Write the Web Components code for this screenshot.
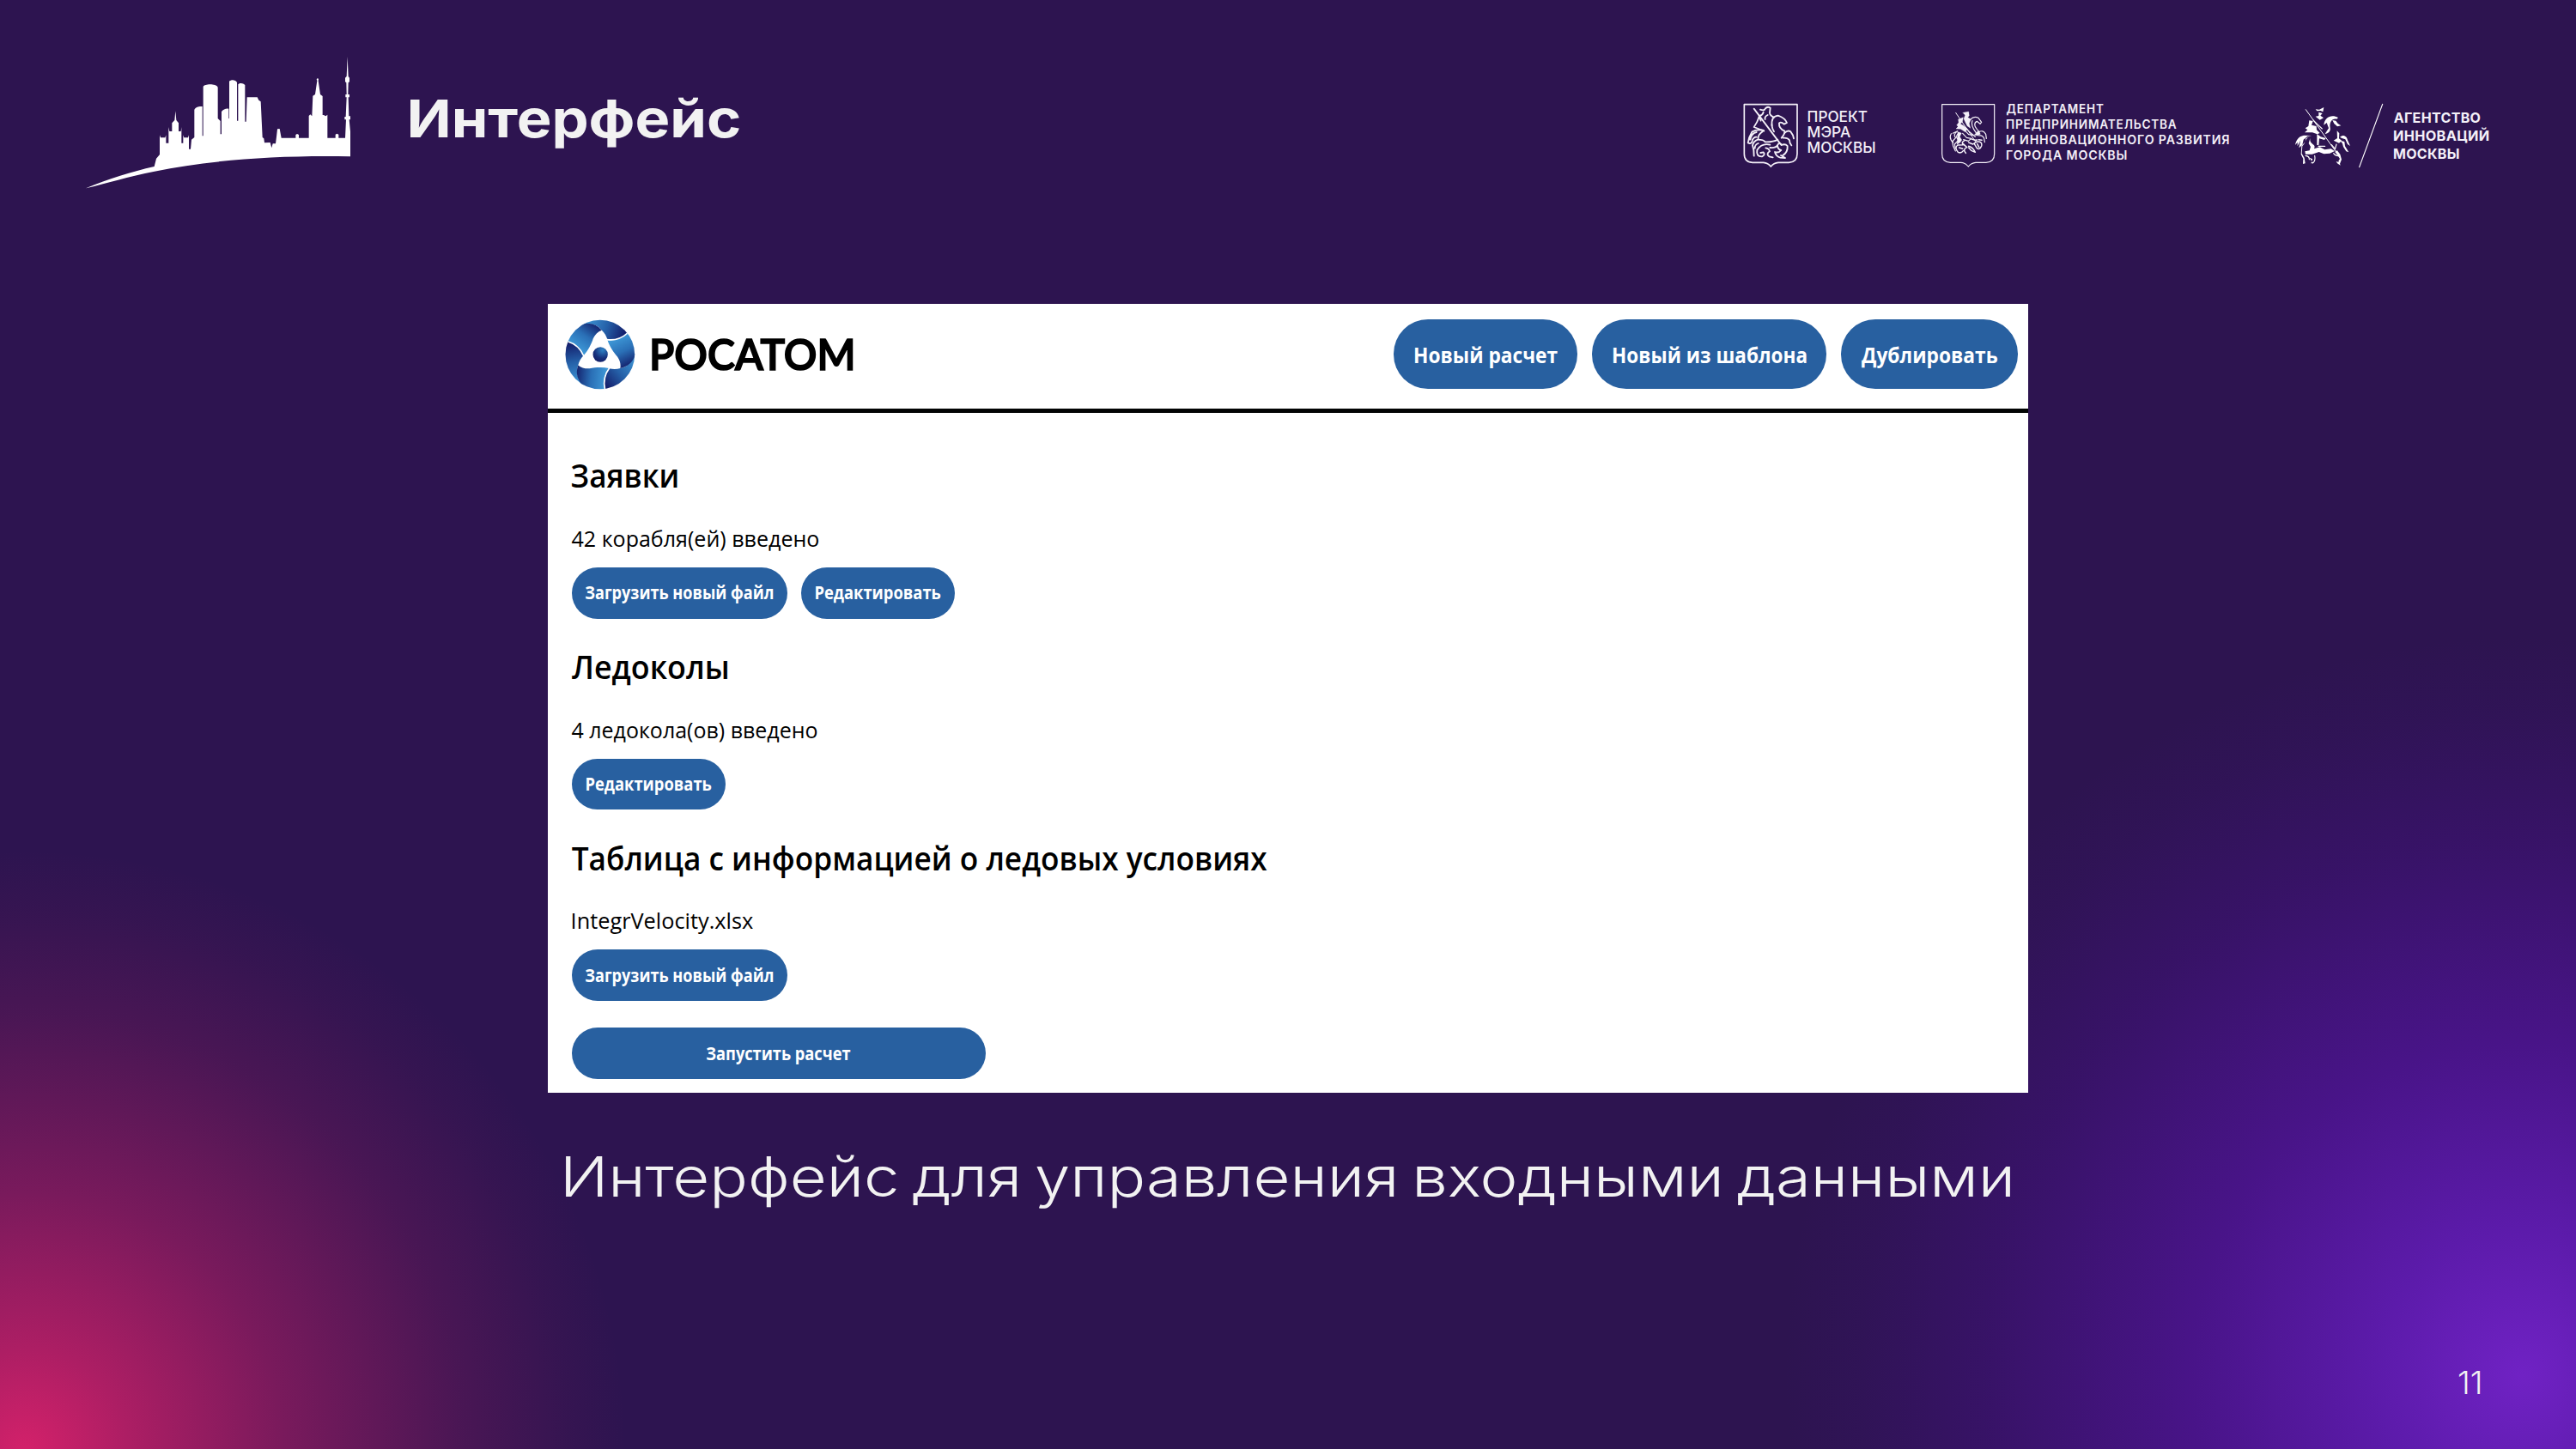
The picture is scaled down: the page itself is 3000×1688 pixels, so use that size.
<!DOCTYPE html>
<html lang="ru">
<head>
<meta charset="utf-8">
<title>Интерфейс</title>
<style>
html,body{margin:0;padding:0;background:#2d1450}
body{width:3000px;height:1688px;overflow:hidden;font-family:Inter,sans-serif}
</style>
</head>
<body>
<deck-slide></deck-slide>
<script>
const define = (name, html, init) => customElements.define(name, class extends HTMLElement {
  connectedCallback() {
    if (this.shadowRoot) return;
    this.attachShadow({mode: 'open'}).innerHTML = html;
    if (init) init(this, this.shadowRoot);
  }
});

/* One line of text: `cap` is the capital height, `w` the visible width. The box is exactly w × cap.
   `ls` and `ws` are letter and word spacing in em, `dy` a baseline nudge in px. */
const ctx = document.createElement('canvas').getContext('2d');
customElements.define('cap-text', class extends HTMLElement {
  connectedCallback() {
    if (this.shadowRoot) return;
    const root = this.attachShadow({mode: 'open'});
    const text = this.getAttribute('text');
    const cap = +this.getAttribute('cap'), w = +this.getAttribute('w');
    const ls = +(this.getAttribute('ls') || 0), ws = +(this.getAttribute('ws') || 0);
    const family = this.getAttribute('font') || 'Inter', weight = this.getAttribute('weight') || '400';
    const nudge = this.hasAttribute('dy') ? +this.getAttribute('dy') : (family === 'Open Sans' ? 0.8 : 0);
    ctx.font = `${weight} 200px "${family}"`;
    ctx.letterSpacing = '0px';
    ctx.wordSpacing = '0px';
    const size = 200 * cap / ctx.measureText('Н').actualBoundingBoxAscent;
    ctx.letterSpacing = ls * 200 + 'px';
    ctx.wordSpacing = ws * 200 + 'px';
    const m = ctx.measureText(text), f = size / 200;
    const ink = (m.actualBoundingBoxLeft + m.actualBoundingBoxRight) * f;
    const k = w / ink;
    const dx = m.actualBoundingBoxLeft * f * k;
    const dy = cap / 2 - (m.fontBoundingBoxAscent - m.fontBoundingBoxDescent) * f / 2 + nudge;
    root.innerHTML = `<style>
      :host{display:block;flex:none;width:${w}px;height:${cap}px;line-height:${cap}px;white-space:nowrap}
      span{display:inline-block;font:${weight} ${size}px/${cap}px "${family}",sans-serif;letter-spacing:${ls}em;word-spacing:${ws}em;
        -webkit-text-stroke:var(--thicken,0) currentColor;
        transform:translate(${dx}px,${dy}px) scaleX(${k});transform-origin:0 50%}
    </style><span></span>`;
    root.querySelector('span').textContent = text;
  }
});

define('city-skyline', `<style>:host{display:block;flex:none;width:350px;height:180px}svg{display:block}</style>
<svg width="350" height="180" viewBox="0 0 1050 540" fill="#fff">
<path d="M60 508C140 474 220 450 299 432L306 404L318 390V322L321 331H337L340 322V350H349V294L352 309H361V280L370 270L373 238L376 270L384 280V309H392L394 294V350H400V322L403 331H417L420 322V371H426L429 338L439 330V234C442 224 455 221 467 222V325H470V153C475 142 515 142 521 155V264L530 273V319H534V240C540 232 550 228 559 230V264H561V134C568 127 583 128 588 138V272H592V145C598 138 610 140 616 147V275H620L623 190H659L664 200L671 205L677 330L682 334L684 349L704 348L709 367L713 352L723 352L726 328L729 301L737 300L743 332H793V321L798 318L804 321V332H839V255L844 250L850 256L853 185L861 180L868 132L866 127L870 123L873 127L872 132L879 180L887 186V252H891L898 256L904 251V332H932V320L937 317L943 320V332H966L969 268H964V258H968L971 190H967V180H971L970 139L966 136V122L971 117L974 48L977 117L981 122V136L977 139L976 180H981V190H977L979 256H984V268H980L984 310V397C740 392 500 408 300 449C210 467 130 491 60 508Z"/>
</svg>`);

define('shield-outline', `<style>:host{display:block;flex:none;width:75px;height:85px}svg{display:block}</style>
<svg width="75" height="85" viewBox="45 45 225 255" fill="none" stroke="#f4f0f8" stroke-width="5.5" stroke-linecap="round" stroke-linejoin="round">
<path stroke-width="5" d="M64 65H249V238Q249 267 220 268H183Q167 269 157 282Q147 269 131 268H93Q64 267 64 238Z"/>
<path d="M98 80L192 205"/>
<path d="M120 83Q135 88 137 80Q145 70 155 77L153 95Q154 104 167 110M131 92Q128 103 117 105Q110 128 98 144Q116 152 132 156M146 102Q134 108 137 117M116 107L122 122"/>
<path d="M161 138Q157 107 182 104L192 108Q207 115 213 129L203 134Q193 124 186 130Q184 149 205 158Q206 169 194 182"/>
<path d="M205 165Q216 153 226 160Q236 172 237 184M199 182Q215 180 222 190Q222 202 229 208"/>
<path d="M133 158Q112 149 91 161Q80 179 77 199Q91 206 93 188Q99 177 107 179M107 162Q89 165 85 188"/>
<path d="M128 160Q110 172 113 187Q96 193 93 208Q99 225 98 245M113 201Q101 205 101 218M113 188Q131 188 137 196Q165 197 181 188M160 137Q162 151 168 160"/>
<path d="M154 206Q125 199 109 224Q105 248 126 247Q139 240 131 232L121 234M139 217Q151 219 153 229Q139 238 151 247L164 250M154 216Q174 218 180 208Q181 222 193 225Q184 236 171 231M171 232Q176 248 190 251L207 252L192 243M194 207Q207 201 215 210Q217 232 198 244M181 206Q186 198 193 204"/>
</svg>`);

define('shield-engraved', `<style>:host{display:block;flex:none;width:75px;height:85px}svg{display:block}</style>
<svg width="75" height="85" viewBox="45 45 225 255" fill="none" stroke="#f4f0f8" stroke-width="3.6" stroke-linecap="round" stroke-linejoin="round">
<path d="M65 65H248V238Q248 267 219 268H183Q167 269 157 282Q147 269 131 268H94Q65 267 65 238Z"/>
<path d="M113 94L184 198" stroke-width="3"/>
<path fill="#f4f0f8" stroke-width="1" d="M138 94L158 90L160 104L155 110L166 117L160 131L164 148L153 140L147 128L141 115L146 103ZM122 117L139 110L136 127L128 132L142 140L153 152L146 161L130 151L114 150L122 142L116 138L123 128ZM184 165L193 155L199 169L190 174L178 172ZM120 161L133 165L127 178L134 189L129 197L117 205L119 187Z"/>
<path d="M164 118Q176 104 192 112L203 127L198 133L187 124Q176 128 181 143L190 156M171 122Q166 136 176 152L184 164M137 166L151 181L167 184L157 193L140 188M193 162Q208 152 218 169L220 184M194 174Q207 171 212 184L214 197M103 166L119 158M119 158Q102 170 113 181L101 195L104 211L112 228M97 167Q88 184 104 198M126 164Q108 174 122 190L109 204L112 219M149 160L158 170L176 173M133 122L121 145M147 145L163 163L181 178"/>
<path stroke-width="4.5" d="M144 191Q131 197 139 206L120 207Q107 216 121 232Q132 237 139 227M139 203L152 215Q136 222 148 235M158 198L173 204L184 196Q207 192 203 210Q197 225 187 218L178 203M158 211Q173 215 181 232L167 226L158 216M125 216L137 220M188 203L194 214M166 185Q178 191 187 189M193 188L204 190"/>
</svg>`);

define('rider-mark', `<style>:host{display:block;flex:none;width:110px;height:85px}svg{display:block}</style>
<svg width="110" height="85" viewBox="60 45 330 255" fill="#fff" stroke="#fff" stroke-linecap="round" stroke-linejoin="round">
<path d="M374 64L293 284" stroke-width="3.5"/>
<path d="M106 83L211 230" stroke-width="3"/>
<path stroke="none" d="M140 82L153 83L169 75L166 91L158 87L145 88ZM151 92L164 96L157 104L168 112L155 119L140 107L151 105ZM118 121L131 123L126 137L143 141L144 154L155 165L146 169L129 163L102 163L112 154L104 148L115 141ZM169 137C171 111 195 98 219 111L214 116C197 113 188 127 191 146C194 157 185 167 173 168L186 148L179 129ZM199 120L211 122L218 132L229 139L216 142L205 132ZM215 157L223 166L222 184L232 192L222 200L203 191L216 183Z"/>
<path stroke="none" d="M225 179C238 168 250 177 252 190L261 210L252 204L244 187L232 183ZM226 191L241 195L243 211L256 232L247 229L237 213L234 202ZM99 173C79 177 72 191 69 207L77 197L77 211L87 191L82 217L94 206L98 188L112 176L127 174ZM119 177C101 187 108 196 94 211L92 236L101 252L104 271L96 273L97 255L89 239L91 210L104 196L106 184Z"/>
<path stroke="none" d="M122 180C115 207 145 201 135 220L155 214L172 223L194 220L207 228L190 236L169 238L152 231L128 239L105 239L103 229L119 226L123 213L116 201ZM145 168L158 178L176 183L171 189L153 184L151 208L145 207ZM208 232L215 225L226 239L231 257L224 275L220 263L225 255L217 242ZM119 251L130 256L126 263L134 270L122 271L128 266ZM212 264L224 268L227 278L216 271Z"/>
<path fill="none" stroke-width="3.5" d="M132 120L146 134L163 150M105 244Q119 246 118 257M137 244Q141 262 130 270M203 236Q210 246 222 245M213 204L208 222M196 206L206 218M150 211L173 211"/>
</svg>`);

define('logo-lockup', `<style>
:host{display:flex;flex:none;width:var(--w);gap:var(--icon-gap)}
.lines{display:flex;flex-direction:column;gap:var(--row);padding-top:var(--pt)}
</style><slot name="icon"></slot><div class="lines"><slot></slot></div>`);

define('slide-header', `<style>
:host{display:flex;align-items:flex-start;height:354px;box-sizing:border-box;padding:50px 0 0 80px;color:#f4f0f8}
.title{margin:66.2px 0 0 48px;color:#f2f2f2}
.logos{display:flex;margin:65px 0 0 auto}
</style>
<city-skyline></city-skyline>
<cap-text class="title" text="Интерфейс" cap="44.3" w="383" weight="700"></cap-text>
<div class="logos">
<logo-lockup style="--w:230px;--icon-gap:5.7px;--row:5.5px;--pt:14.6px">
<shield-outline slot="icon"></shield-outline>
<cap-text text="ПРОЕКТ" cap="12.5" w="68.3" weight="500"></cap-text>
<cap-text text="МЭРА" cap="12.5" w="48.8" weight="500"></cap-text>
<cap-text text="МОСКВЫ" cap="12.5" w="77.3" weight="500"></cap-text>
</logo-lockup>
<logo-lockup style="--w:415px;--icon-gap:6.7px;--row:7.65px;--pt:6.2px">
<shield-engraved slot="icon"></shield-engraved>
<cap-text text="ДЕПАРТАМЕНТ" cap="10.2" w="112.3" weight="600" ls=".06"></cap-text>
<cap-text text="ПРЕДПРИНИМАТЕЛЬСТВА" cap="10.2" w="197.5" weight="600" ls=".06"></cap-text>
<cap-text text="И ИННОВАЦИОННОГО РАЗВИТИЯ" cap="10.2" w="258.6" weight="600" ls=".06"></cap-text>
<cap-text text="ГОРОДА МОСКВЫ" cap="10.2" w="139.3" weight="600" ls=".06"></cap-text>
</logo-lockup>
<logo-lockup style="--w:330px;--icon-gap:7.7px;--row:9.4px;--pt:16.6px">
<rider-mark slot="icon"></rider-mark>
<cap-text text="АГЕНТСТВО" cap="11.7" w="100.3" weight="700" ls=".02"></cap-text>
<cap-text text="ИННОВАЦИЙ" cap="11.7" w="110.3" weight="700" ls=".02"></cap-text>
<cap-text text="МОСКВЫ" cap="11.7" w="75.5" weight="700" ls=".02"></cap-text>
</logo-lockup>
</div>`);

define('rosatom-mark', `<style>:host{display:block;flex:none;width:82px;height:82px}svg{display:block}</style>
<svg width="82" height="82" viewBox="83.5 80 246 246">
<defs>
<linearGradient id="p" gradientUnits="userSpaceOnUse" x1="165" y1="90" x2="290" y2="135"><stop offset="0" stop-color="#3b8fcf"/><stop offset=".5" stop-color="#2560a8"/><stop offset="1" stop-color="#141f6c"/></linearGradient>
<linearGradient id="q" gradientUnits="userSpaceOnUse" x1="125" y1="180" x2="185" y2="95"><stop offset="0" stop-color="#3d97d6"/><stop offset=".5" stop-color="#2a6fb6"/><stop offset="1" stop-color="#14246f"/></linearGradient>
<radialGradient id="d" cx=".65" cy=".2" r=".85"><stop offset="0" stop-color="#2f83c6"/><stop offset=".65" stop-color="#16307c"/><stop offset="1" stop-color="#111d66"/></radialGradient>
<clipPath id="c"><circle cx="206" cy="203" r="121"/></clipPath>
<g id="b">
<path fill="url(#p)" d="M120 110L150 70L260 70L310 118L300 130Q270 157 232 151C228 138 222 127 212 118C190 92 160 90 120 110Z"/>
<path fill="url(#q)" d="M93 160L85 145L125 100C165 88 192 94 212 118C198 123 188 134 182 147C176 166 164 190 149 206Q139 173 93 160Z"/>
</g>
</defs>
<circle cx="206" cy="203" r="121" fill="#fff"/>
<g clip-path="url(#c)">
<use href="#b"/><use href="#b" transform="rotate(120 206 203)"/><use href="#b" transform="rotate(240 206 203)"/>
<g fill="none" stroke="#fff" stroke-width="5"><path id="s" d="M302 128Q272 156 230 151"/><use href="#s" transform="rotate(120 206 203)"/><use href="#s" transform="rotate(240 206 203)"/></g>
</g>
<circle cx="207" cy="203" r="26" fill="url(#d)"/>
</svg>`);

define('pill-button', `<style>
:host{display:block;flex:none;width:var(--w);height:var(--h,59.5px)}
button{all:unset;box-sizing:border-box;width:100%;height:100%;display:flex;padding:var(--ty,22.2px) 0 0 var(--tx,16px);
background:#2860a0;color:#fff;border-radius:var(--r,30px)}
</style><button><slot></slot></button>`);

define('app-header', `<style>
:host{display:flex;align-items:flex-start;height:127px;box-sizing:border-box;border-bottom:5px solid #020403;padding:17.5px 12px 0 20px}
.word{margin:23px 0 0 19.5px;--thicken:1.7px}
.actions{display:flex;gap:16.3px;margin-left:auto;--h:81px;--r:40px;--ty:32px}
</style>
<rosatom-mark></rosatom-mark>
<cap-text class="word" text="РОСАТОМ" cap="36.5" w="232.6" font="Lato" weight="600"></cap-text>
<div class="actions">
<pill-button style="--w:214.5px;--tx:25.3px"><cap-text text="Новый расчет" cap="18.4" w="165.7" font="Open Sans" weight="700"></cap-text></pill-button>
<pill-button style="--w:273.5px;--tx:25px"><cap-text text="Новый из шаблона" cap="18.4" w="224.5" font="Open Sans" weight="700"></cap-text></pill-button>
<pill-button style="--w:206.5px;--tx:24px"><cap-text text="Дублировать" cap="18.4" w="158" font="Open Sans" weight="700"></cap-text></pill-button>
</div>`);

define('input-section', `<style>
:host{display:block;height:222.7px}
.head{height:78.6px}
.info{height:42.2px}
.row{display:flex;gap:15.5px}
</style>
<div class="head"><slot name="head"></slot></div><div class="info"><slot name="info"></slot></div><div class="row"><slot></slot></div>`);

define('app-window', `<style>
:host{display:block;width:1724px;height:918.3px;background:#fff;color:#000;margin-top:.3px}
main{padding:59px 0 0 28.3px}
</style>
<app-header></app-header>
<main>
<input-section>
<cap-text slot="head" text="Заявки" cap="27.4" w="122.6" font="Open Sans" weight="600"></cap-text>
<cap-text slot="info" text="42 корабля(ей) введено" cap="17.8" w="287.3" font="Open Sans"></cap-text>
<pill-button style="--w:251px"><cap-text text="Загрузить новый файл" cap="15" w="218.3" font="Open Sans" weight="700"></cap-text></pill-button>
<pill-button style="--w:179px;--tx:17px"><cap-text text="Редактировать" cap="15" w="145.3" font="Open Sans" weight="700"></cap-text></pill-button>
</input-section>
<input-section>
<cap-text slot="head" text="Ледоколы" cap="27.4" w="181" font="Open Sans" weight="600"></cap-text>
<cap-text slot="info" text="4 ледокола(ов) введено" cap="17.8" w="285.5" font="Open Sans"></cap-text>
<pill-button style="--w:179px;--tx:16.5px"><cap-text text="Редактировать" cap="15" w="145.3" font="Open Sans" weight="700"></cap-text></pill-button>
</input-section>
<input-section>
<cap-text slot="head" text="Таблица с информацией о ледовых условиях" cap="27.4" w="809.5" font="Open Sans" weight="600"></cap-text>
<cap-text slot="info" style="margin-left:1px" text="IntegrVelocity.xlsx" cap="17.8" w="210" font="Open Sans"></cap-text>
<pill-button style="--w:251px"><cap-text text="Загрузить новый файл" cap="15" w="218.3" font="Open Sans" weight="700"></cap-text></pill-button>
</input-section>
<pill-button style="--w:481.5px;--tx:157.2px;margin-top:-11px"><cap-text text="Запустить расчет" cap="15" w="167.2" font="Open Sans" weight="700"></cap-text></pill-button>
</main>`);

define('deck-slide', `<style>
:host{display:flex;flex-direction:column;width:3000px;height:1688px;color:#f2f2f2;
background:
radial-gradient(circle 700px at 30px 1690px,rgba(211,33,106,1),rgba(211,33,106,.77) 17%,rgba(211,33,106,.46) 43%,rgba(211,33,106,.17) 73%,rgba(211,33,106,.05) 90%,rgba(211,33,106,0)),
radial-gradient(circle 860px at 2938px 1602px,#7022c4,rgba(100,28,186,.85) 20%,rgba(84,20,160,.7) 45%,rgba(76,16,148,.33) 73%,rgba(76,16,148,.09) 90%,rgba(76,16,148,0)),
#2d1450}
app-window{margin-left:638px}
.caption{margin:74px 0 0 658.7px}
.page{margin:204px 0 0 2863.5px}
</style>
<slide-header></slide-header>
<app-window></app-window>
<cap-text class="caption" text="Интерфейс для управления входными данными" cap="47.3" w="1682.3" weight="300" ws="-.08"></cap-text>
<cap-text class="page" text="11" cap="26.3" w="24" weight="300"></cap-text>`);
</script>
</body>
</html>
